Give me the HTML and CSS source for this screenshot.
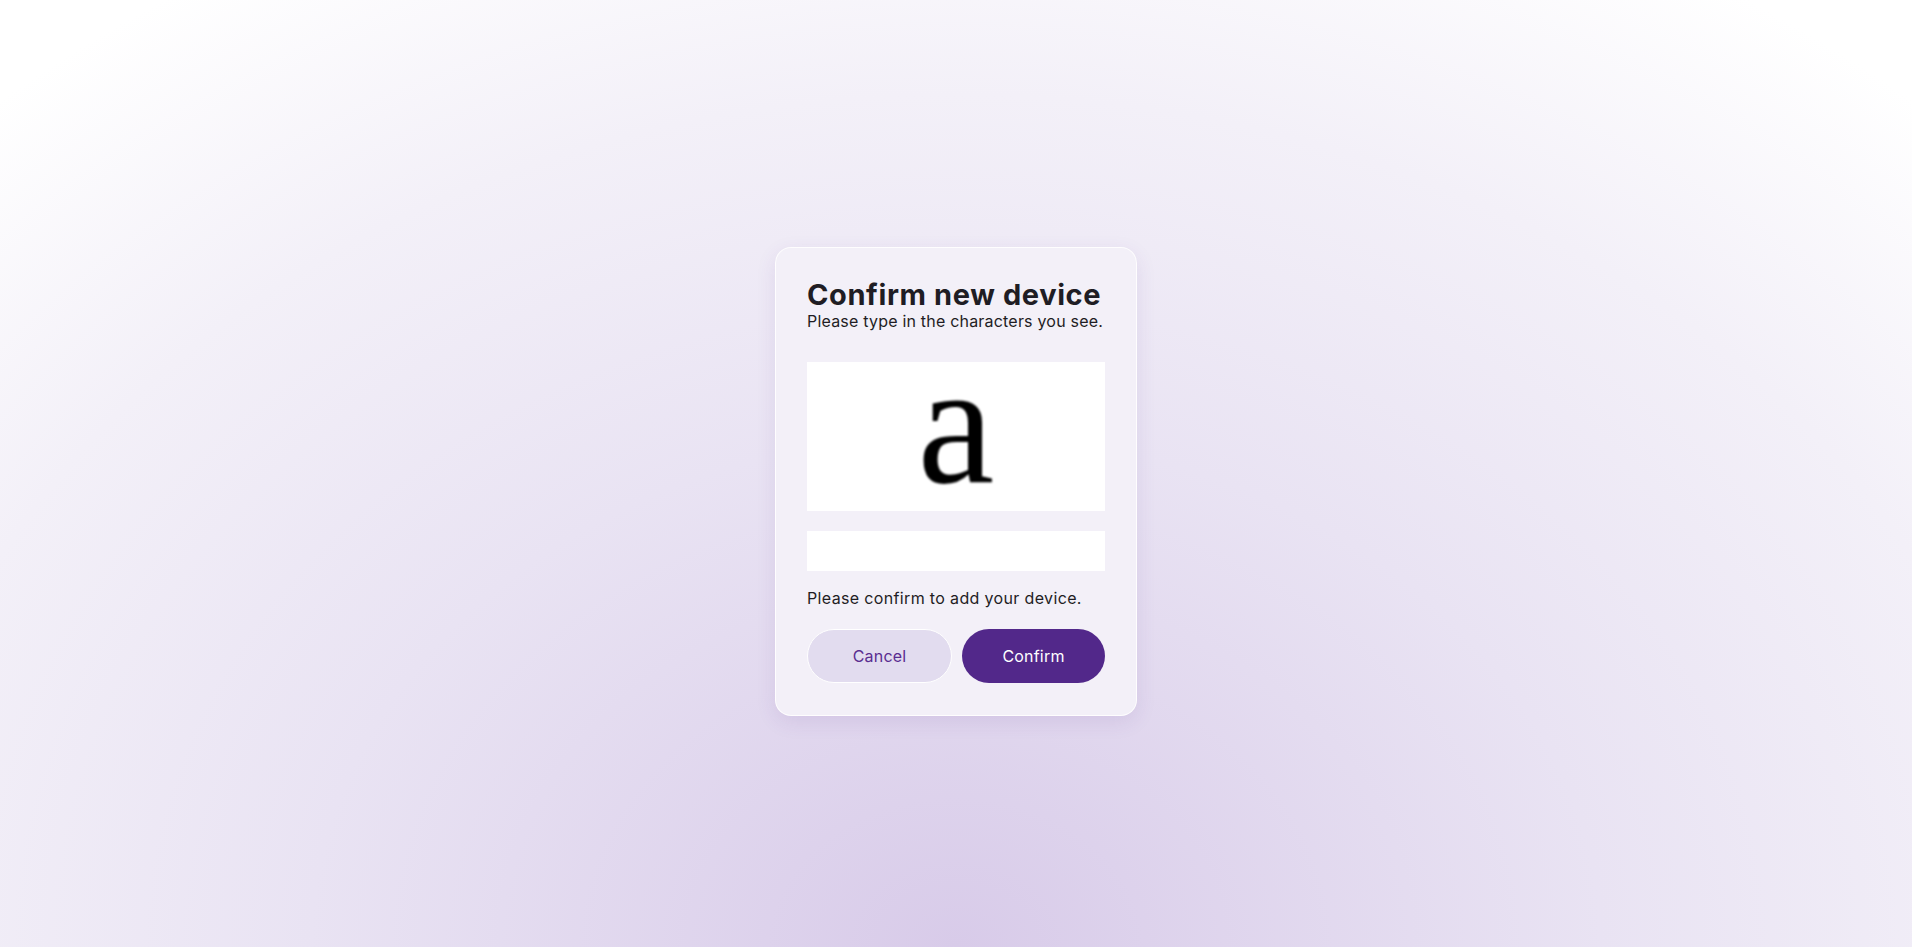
FILE: index.html
```html
<!DOCTYPE html>
<html lang="en">
<head>
<meta charset="utf-8">
<title>Confirm new device</title>
<link rel="stylesheet" href="styles.css">
</head>
<body>
<main class="page">
  <section class="card">
    <h1 class="title">Confirm new device</h1>
    <p class="subtitle">Please type in the characters you see.</p>
    <div class="captcha"><span class="captcha-char">a</span></div>
    <input class="captcha-input" type="text" aria-label="Characters">
    <p class="note">Please confirm to add your device.</p>
    <div class="actions">
      <button class="btn btn-cancel" type="button">Cancel</button>
      <button class="btn btn-confirm" type="button">Confirm</button>
    </div>
  </section>
</main>
</body>
</html>
```
FILE: styles.css
```css
* { box-sizing: border-box; }
html, body { margin: 0; height: 100%; }
body {
  font-family: "Inter", "Open Sans", sans-serif;
  color: #1f1d24;
  background: radial-gradient(ellipse 75% 120% at 50% 100%, #d8cbe9 0%, #e9e3f3 45%, #f3f0f8 75%, #ffffff 100%);
}
.page {
  min-height: 100vh;
  display: flex;
  align-items: center;
  justify-content: center;
  padding-top: 15px;
}
.card {
  width: 362px;
  padding: 32px 31px;
  background: #f3f0f8;
  border: 1px solid rgba(255,255,255,0.85);
  border-radius: 16px;
  box-shadow: 0 6px 20px rgba(90, 50, 150, 0.10);
}
.title {
  margin: 0;
  font-size: 29px;
  font-weight: 700;
  line-height: 30px;
  letter-spacing: 0.6px;
  color: #1f1d24;
  white-space: nowrap;
}
.subtitle {
  margin: 0;
  font-size: 16px;
  line-height: 22px;
  letter-spacing: 0.2px;
  white-space: nowrap;
}
.captcha {
  margin-top: 30px;
  height: 149px;
  padding-bottom: 24px;
  background: #fff;
  display: flex;
  align-items: center;
  justify-content: center;
}
.captcha-char {
  font-family: "Liberation Serif", serif;
  font-size: 173px;
  line-height: 0.7;
  color: #000;
  filter: blur(1px);
}
.captcha-input {
  display: block;
  width: 100%;
  height: 40px;
  margin-top: 20px;
  border: 0;
  background: #fff;
  font: inherit;
  padding: 0 12px;
  outline: none;
}
.note {
  margin: 16px 0 0;
  font-size: 16px;
  line-height: 22px;
  letter-spacing: 0.35px;
  white-space: nowrap;
}
.actions {
  display: flex;
  gap: 10px;
  margin-top: 20px;
}
.btn {
  flex: 1;
  height: 54px;
  border-radius: 27px;
  font-family: inherit;
  font-size: 16px;
  letter-spacing: 0.2px;
  cursor: pointer;
}
.btn-cancel {
  background: #e2dcef;
  border: 1.5px solid #ffffff;
  color: #5a2d91;
}
.btn-confirm {
  background: #52288a;
  border: 0;
  color: #ffffff;
}
```
